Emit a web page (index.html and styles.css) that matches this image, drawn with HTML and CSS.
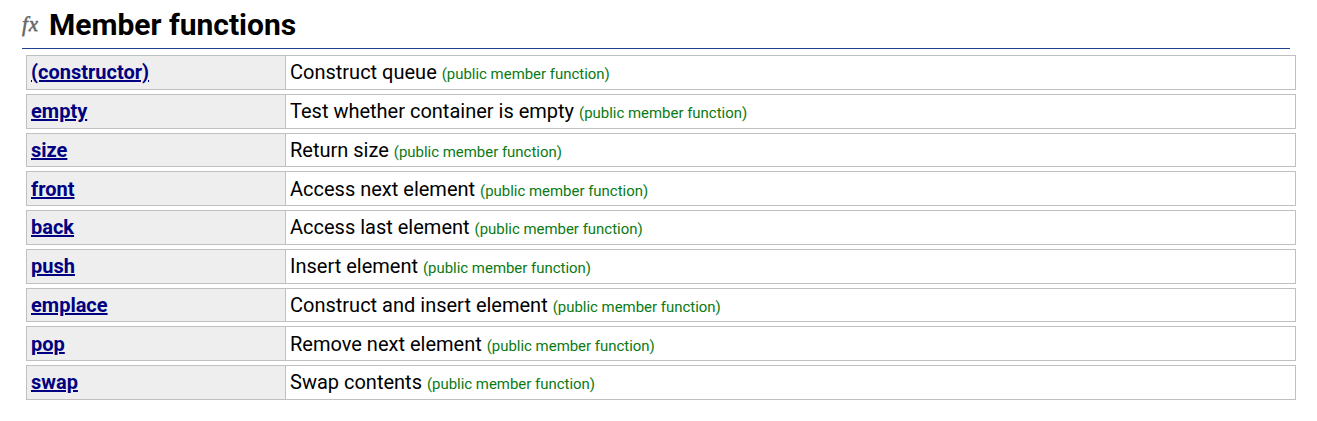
FILE: index.html
```html
<!DOCTYPE html>
<html lang="en">
<head>
<meta charset="utf-8">
<title>Member functions</title>
<link rel="stylesheet" href="styles.css">
</head>
<body>
<section class="section">
<h3 class="heading"><span class="fx" aria-hidden="true">fx</span>Member functions</h3>
<table class="links">
<tbody>
<tr><td class="name"><a href="#">(constructor)</a></td><td class="desc">Construct queue <span class="kind">(public member function)</span></td></tr>
<tr><td class="name"><a href="#">empty</a></td><td class="desc">Test whether container is empty <span class="kind">(public member function)</span></td></tr>
<tr><td class="name"><a href="#">size</a></td><td class="desc">Return size <span class="kind">(public member function)</span></td></tr>
<tr><td class="name"><a href="#">front</a></td><td class="desc">Access next element <span class="kind">(public member function)</span></td></tr>
<tr><td class="name"><a href="#">back</a></td><td class="desc">Access last element <span class="kind">(public member function)</span></td></tr>
<tr><td class="name"><a href="#">push</a></td><td class="desc">Insert element <span class="kind">(public member function)</span></td></tr>
<tr><td class="name"><a href="#">emplace</a></td><td class="desc">Construct and insert element <span class="kind">(public member function)</span></td></tr>
<tr><td class="name"><a href="#">pop</a></td><td class="desc">Remove next element <span class="kind">(public member function)</span></td></tr>
<tr><td class="name"><a href="#">swap</a></td><td class="desc">Swap contents <span class="kind">(public member function)</span></td></tr>
</tbody>
</table>
</section>
</body>
</html>
```
FILE: styles.css
```css
html, body {
  margin: 0;
  padding: 0;
  background: #fff;
}
body {
  font-family: Roboto, "Liberation Sans", sans-serif;
  color: #000;
  overflow: hidden;
}
.section {
  padding: 7px 21px 0 22px;
}
.heading {
  display: flex;
  align-items: center;
  margin: 0 6px 2px 0;
  height: 36px;
  padding: 0 0 5px 0;
  border-bottom: 1px solid #1f3f8f;
  font-size: 30px;
  line-height: 36px;
  font-weight: 700;
  box-sizing: content-box;
}
.fx {
  width: 27px;
  padding-bottom: 3px;
  font-family: "Liberation Serif", "DejaVu Serif", serif;
  font-style: italic;
  font-weight: 400;
  font-size: 21px;
  line-height: 30px;
  letter-spacing: 1px;
  color: #666;
  -webkit-text-stroke: 0.4px #666;
  text-shadow: 0 1px 1px #ccc;
}
.links {
  width: 1270px;
  margin: 0 0 0 4px;
  border-collapse: separate;
  border-spacing: 0 4px;
  table-layout: fixed;
}
.links td {
  height: 34.75px;
  box-sizing: border-box;
  padding: 0 4px;
  border: 1px solid #c0c0c0;
  vertical-align: middle;
}
.name {
  width: 259px;
  background: #eee;
  border-right: 0 !important;
  font-size: 20px;
  font-weight: 700;
}
.name a {
  color: #000080;
}
.desc {
  font-size: 20px;
}
.kind {
  font-size: 14.95px;
  color: #0a7a14;
}
```
